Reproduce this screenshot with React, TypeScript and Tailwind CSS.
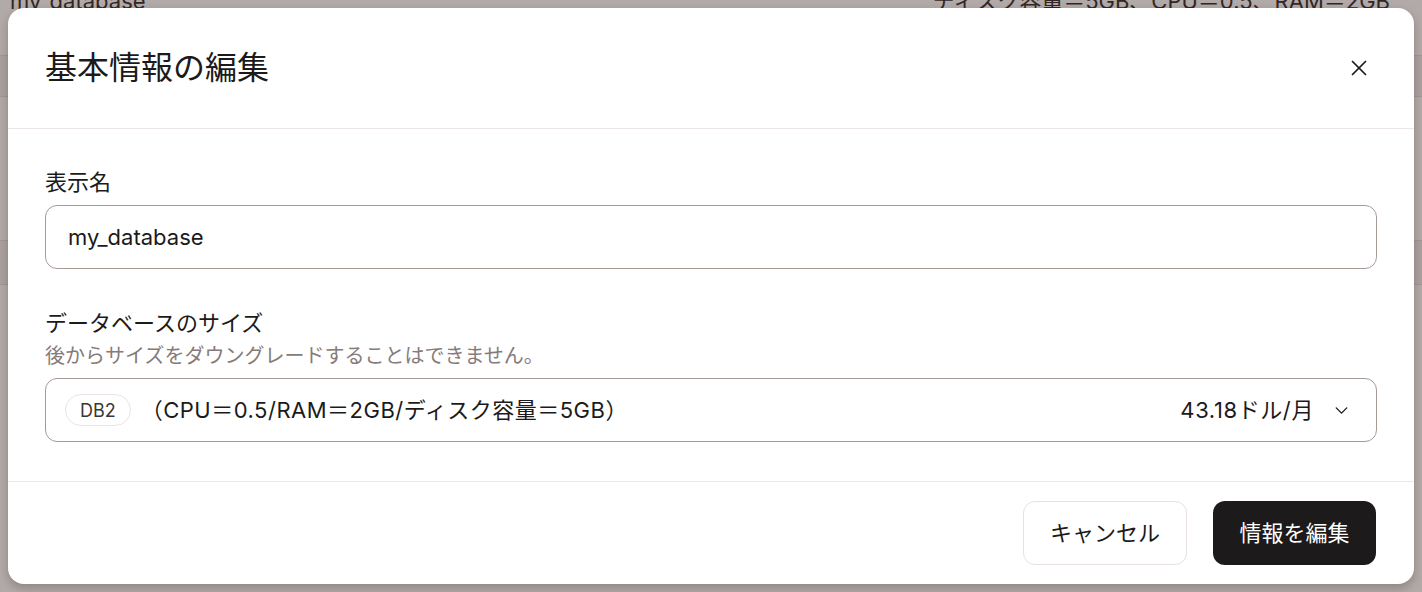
import { X, ChevronDown } from 'lucide-react';

const fontStack = "font-['Inter','Noto_Sans_CJK_JP',sans-serif]";

function BackgroundPage() {
  return (
    <div className="min-h-[592px] bg-white">
      <div className="flex items-start justify-between px-[10px] -mt-[13px] h-[68px] text-[22px] leading-[28px] text-[#2a2524]">
        <span>my_database</span>
        <span className="pr-[22px]">ディスク容量＝5GB、CPU＝0.5、RAM＝2GB</span>
      </div>
      <div className="h-[42px] bg-[#f4f1f0] border-y border-[#e4dedc]" />
      <div className="h-[143px]" />
      <div className="h-[45px] bg-[#f4f1f0] border-y border-[#e4dedc]" />
    </div>
  );
}

export default function App() {
  return (
    <div className={`relative h-[592px] w-[1422px] overflow-hidden ${fontStack}`}>
      <BackgroundPage />

      {/* overlay + dialog */}
      <div className="absolute inset-0 bg-[#3f2a25]/40 p-2 flex">
        <div className="flex flex-col w-full h-full bg-white rounded-[16px] shadow-[0_4px_10px_rgba(40,20,15,0.25)]">
          {/* Header */}
          <div className="flex items-center justify-between h-[121px] pl-[37px] pr-[42px] border-b border-[#ece6e4] shrink-0">
            <h2 className="text-[32px] leading-[40px] font-normal text-[#1c1a1a]">基本情報の編集</h2>
            <button type="button" className="text-[#1c1a1a]" aria-label="閉じる">
              <X size={26} strokeWidth={1.6} />
            </button>
          </div>

          {/* Body */}
          <div className="flex flex-col px-[37px] pt-[38px] pb-[39px] border-b border-[#ece6e4]">
            <label className="text-[22px] leading-[30px] text-[#1c1a1a]">表示名</label>
            <div className="mt-2 h-[64px] flex items-center px-[22px] rounded-[12px] border border-[#a59a96] text-[22px] text-[#1c1a1a]">
              my_database
            </div>

            <label className="mt-[39px] text-[22px] leading-[30px] text-[#1c1a1a]">データベースのサイズ</label>
            <p className="mt-1 text-[20px] leading-[28px] text-[#857b78]">後からサイズをダウングレードすることはできません。</p>
            <div className="mt-2 h-[64px] flex items-center justify-between pl-[19px] pr-[24px] rounded-[12px] border border-[#a59a96] text-[22px] text-[#1c1a1a]">
              <div className="flex items-center gap-[10px]">
                <span className="h-[32px] px-[14px] flex items-center rounded-full border border-[#ebe4e2] text-[18px] text-[#3a3636]">DB2</span>
                <span className="tracking-[0.5px]">（CPU＝0.5/RAM＝2GB/ディスク容量＝5GB）</span>
              </div>
              <div className="flex items-center gap-[17px]">
                <span className="tracking-[0.6px]">43.18ドル/月</span>
                <ChevronDown size={21} strokeWidth={1.6} className="text-[#1c1a1a]" />
              </div>
            </div>
          </div>

          {/* Footer */}
          <div className="flex justify-end gap-[26px] pt-[19px] pr-[38px]">
            <button type="button" className="h-[64px] w-[164px] rounded-[12px] border border-[#e8e1df] bg-white text-[22px] text-[#1c1a1a]">
              キャンセル
            </button>
            <button type="button" className="h-[64px] w-[163px] rounded-[12px] bg-[#1c1a1a] text-[22px] text-white">
              情報を編集
            </button>
          </div>
        </div>
      </div>
    </div>
  );
}
